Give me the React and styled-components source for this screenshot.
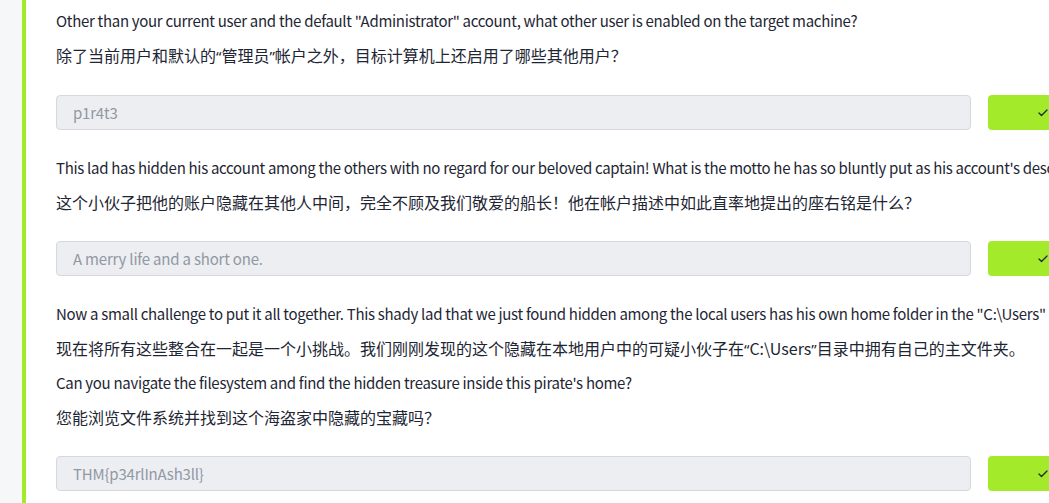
import React from 'react';
import styled, { createGlobalStyle } from 'styled-components';
import { Check } from 'lucide-react';

const GlobalStyle = createGlobalStyle`
    html, body {
        margin: 0;
        padding: 0;
        overflow: hidden;
        background: #f6f7f9;
    }
    body {
        font-family: "Noto Sans CJK SC", "Noto Sans", sans-serif;
    }
`

const Page = styled.div`
    display: flex;
    width: 1049px;
    height: 503px;
    overflow: hidden;
    background: #f6f7f9;
`

const Gutter = styled.div`
    width: 22px;
    flex-shrink: 0;
`

const Panel = styled.div`
    flex: 1;
    display: flex;
    flex-direction: column;
    border-left: 4px solid #a3ea2a;
    background: #ffffff;
    padding: 9px 0 0 30px;
    min-width: 0;
`

const Question = styled.div`
    display: flex;
    flex-direction: column;
    &:not(:first-of-type) {
        margin-top: 26px;
    }
`

const Text = styled.p`
    margin: 0 0 10px;
    font-size: ${p => p.$cjk ? '16px' : '15px'};
    letter-spacing: ${p => p.$cjk ? '0' : '-0.3px'};
    line-height: 24px;
    color: #1e2633;
    white-space: nowrap;
`

const Quote = styled.span`
    font-family: "Noto Sans", sans-serif;
    font-size: 15px;
`

const AnswerRow = styled.div`
    display: flex;
    gap: 17px;
    margin-top: 17px;
    width: 1100px;
`

const Input = styled.div`
    width: 915px;
    height: 35px;
    flex-shrink: 0;
    box-sizing: border-box;
    display: flex;
    align-items: center;
    padding-left: 16px;
    background: #eceef2;
    border: 1px solid #d5d9df;
    border-radius: 4px;
    font-size: 15px;
    letter-spacing: -0.2px;
    color: #9198a3;
`

const Submit = styled.button`
    width: 110px;
    height: 35px;
    flex-shrink: 0;
    display: flex;
    align-items: center;
    justify-content: center;
    background: #a3ea2a;
    border: none;
    border-radius: 4px;
    color: #1e2633;
    padding: 0;
`

// split so curly quotes render narrow, like the latin font in the reference
const renderLine = line => line.split(/([“”])/).map((part, k) =>
    part === '“' || part === '”' ? <Quote key={k}>{part}</Quote> : part
)

const questions = [
    {
        lines: [
            'Other than your current user and the default "Administrator" account, what other user is enabled on the target machine?',
            '除了当前用户和默认的“管理员”帐户之外，目标计算机上还启用了哪些其他用户？',
        ],
        answer: 'p1r4t3',
    },
    {
        lines: [
            "This lad has hidden his account among the others with no regard for our beloved captain! What is the motto he has so bluntly put as his account's description?",
            '这个小伙子把他的账户隐藏在其他人中间，完全不顾及我们敬爱的船长！他在帐户描述中如此直率地提出的座右铭是什么？',
        ],
        answer: 'A merry life and a short one.',
    },
    {
        lines: [
            'Now a small challenge to put it all together. This shady lad that we just found hidden among the local users has his own home folder in the "C:\\Users" directory.',
            '现在将所有这些整合在一起是一个小挑战。我们刚刚发现的这个隐藏在本地用户中的可疑小伙子在“C:\\Users”目录中拥有自己的主文件夹。',
            "Can you navigate the filesystem and find the hidden treasure inside this pirate's home?",
            '您能浏览文件系统并找到这个海盗家中隐藏的宝藏吗？',
        ],
        answer: 'THM{p34rlInAsh3ll}',
    },
]

const isCjk = line => /[\u4e00-\u9fff]/.test(line)

const App = () => {
    const items = questions.map((q, i) => <Question key={i}>
        {q.lines.map((line, j) => <Text key={j} $cjk={isCjk(line)}>{renderLine(line)}</Text>)}
        <AnswerRow>
            <Input>{q.answer}</Input>
            <Submit><Check size={12} strokeWidth={2.5} /></Submit>
        </AnswerRow>
    </Question>)

    return (
        <Page>
            <GlobalStyle />
            <Gutter />
            <Panel>
                {items}
            </Panel>
        </Page>
    );
}

export default App
